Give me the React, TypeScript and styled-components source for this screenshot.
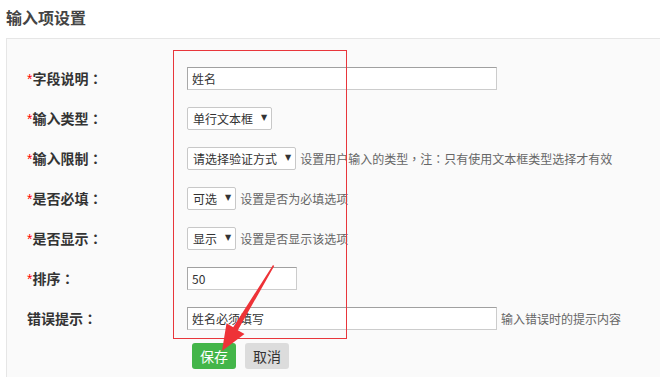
import React from "react";
import styled, { createGlobalStyle } from "styled-components";

const Global = createGlobalStyle`
  html, body { margin: 0; padding: 0; background: #fff; }
  body { font-family: "Noto Sans CJK SC", "Noto Sans", sans-serif; color: #333; overflow: hidden; }
  * { box-sizing: border-box; }
`;

const Page = styled.div`
  position: relative;
  width: 660px;
  height: 377px;
  overflow: hidden;
`;

const Title = styled.h2`
  margin: 0;
  height: 38px;
  padding: 6px 0 0 6px;
  font-size: 16px;
  line-height: 22px;
  font-weight: 700;
  color: #444;
`;

const Panel = styled.div`
  margin-left: 6px;
  height: 400px;
  border: 1px solid #e6e6e6;
  border-right: none;
  background: #fafafa;
  padding: 19px 0 0 20px;
`;

const Row = styled.div`
  display: flex;
  align-items: center;
  height: 40px;
`;

const Label = styled.div`
  width: 160px;
  flex: none;
  font-size: 14px;
  font-weight: 700;
  color: #333;
  white-space: nowrap;
`;

const Star = styled.span`
  color: #f00;
  font-weight: 400;
  font-family: "Liberation Sans", sans-serif;
`;

const Punct = styled.span`
  font-family: "Noto Sans CJK TC", sans-serif;
`;

const Field = styled.div`
  display: flex;
  align-items: center;
  gap: 4px;
`;

const TextInput = styled.input<{ $w: number }>`
  width: ${(p) => p.$w}px;
  height: 23px;
  margin: 0;
  padding: 0 4px;
  border: 1px solid #ccc;
  border-top-color: #a0a0a0;
  border-left-color: #a8a8a8;
  background: #fff;
  font-family: "Noto Sans CJK SC", sans-serif;
  font-size: 12px;
  color: #333;
  outline: none;
`;

const Select = styled.div`
  display: inline-flex;
  align-items: center;
  gap: 8px;
  height: 23px;
  padding: 0 4px 0 5px;
  border: 1px solid #c8c8c8;
  border-radius: 2px;
  background: #fff;
  font-size: 12px;
  color: #333;
  white-space: nowrap;
`;

const Caret = styled.span`
  font-size: 8px;
  color: #333;
  line-height: 1;
  font-family: "DejaVu Sans", sans-serif;
`;

const Hint = styled.span`
  font-size: 12px;
  color: #666;
  white-space: nowrap;
`;

const Buttons = styled.div`
  display: flex;
  gap: 9px;
  margin: 5px 0 0 165px;
`;

const Button = styled.button<{ $primary?: boolean }>`
  height: 26px;
  padding: 0 8px;
  border: none;
  border-radius: 3px;
  font-family: "Noto Sans CJK SC", sans-serif;
  font-size: 14px;
  line-height: 26px;
  color: ${(p) => (p.$primary ? "#fff" : "#333")};
  background: ${(p) => (p.$primary ? "#43b549" : "#dcdcdc")};
  cursor: pointer;
`;

const RedFrame = styled.div`
  position: absolute;
  left: 173px;
  top: 50px;
  width: 174px;
  height: 289px;
  border: 1px solid #e8363b;
  pointer-events: none;
`;

const ArrowLayer = styled.svg`
  position: absolute;
  left: 0;
  top: 0;
  pointer-events: none;
`;

const Sel = ({ text }: { text: string }) => (
  <Select>
    <span>{text}</span>
    <Caret>▼</Caret>
  </Select>
);

const L = ({ req, text }: { req?: boolean; text: string }) => (
  <Label>
    {req && <Star>*</Star>}
    {text}
    <Punct>：</Punct>
  </Label>
);

export default function App() {
  return (
    <Page>
      <Global />
      <Title>输入项设置</Title>
      <Panel>
        <Row>
          <L req text="字段说明" />
          <Field><TextInput $w={310} readOnly defaultValue="姓名" /></Field>
        </Row>
        <Row>
          <L req text="输入类型" />
          <Field><Sel text="单行文本框" /></Field>
        </Row>
        <Row>
          <L req text="输入限制" />
          <Field>
            <Sel text="请选择验证方式" />
            <Hint>
              设置用户输入的类型<Punct>，</Punct>注<Punct>：</Punct>只有使用文本框类型选择才有效
            </Hint>
          </Field>
        </Row>
        <Row>
          <L req text="是否必填" />
          <Field>
            <Sel text="可选" />
            <Hint>设置是否为必填选项</Hint>
          </Field>
        </Row>
        <Row>
          <L req text="是否显示" />
          <Field>
            <Sel text="显示" />
            <Hint>设置是否显示该选项</Hint>
          </Field>
        </Row>
        <Row>
          <L req text="排序" />
          <Field><TextInput $w={110} readOnly defaultValue="50" /></Field>
        </Row>
        <Row>
          <L text="错误提示" />
          <Field>
            <TextInput $w={310} readOnly defaultValue="姓名必须填写" />
            <Hint>输入错误时的提示内容</Hint>
          </Field>
        </Row>
        <Buttons>
          <Button $primary>保存</Button>
          <Button>取消</Button>
        </Buttons>
      </Panel>
      <RedFrame />
      <ArrowLayer width="660" height="377" viewBox="0 0 660 377">
        <polygon
          points="273,265 274.2,266 237.8,330.2 244.5,334 222,351 226.5,323.2 233.2,327.2"
          fill="#ee3237"
        />
      </ArrowLayer>
    </Page>
  );
}
